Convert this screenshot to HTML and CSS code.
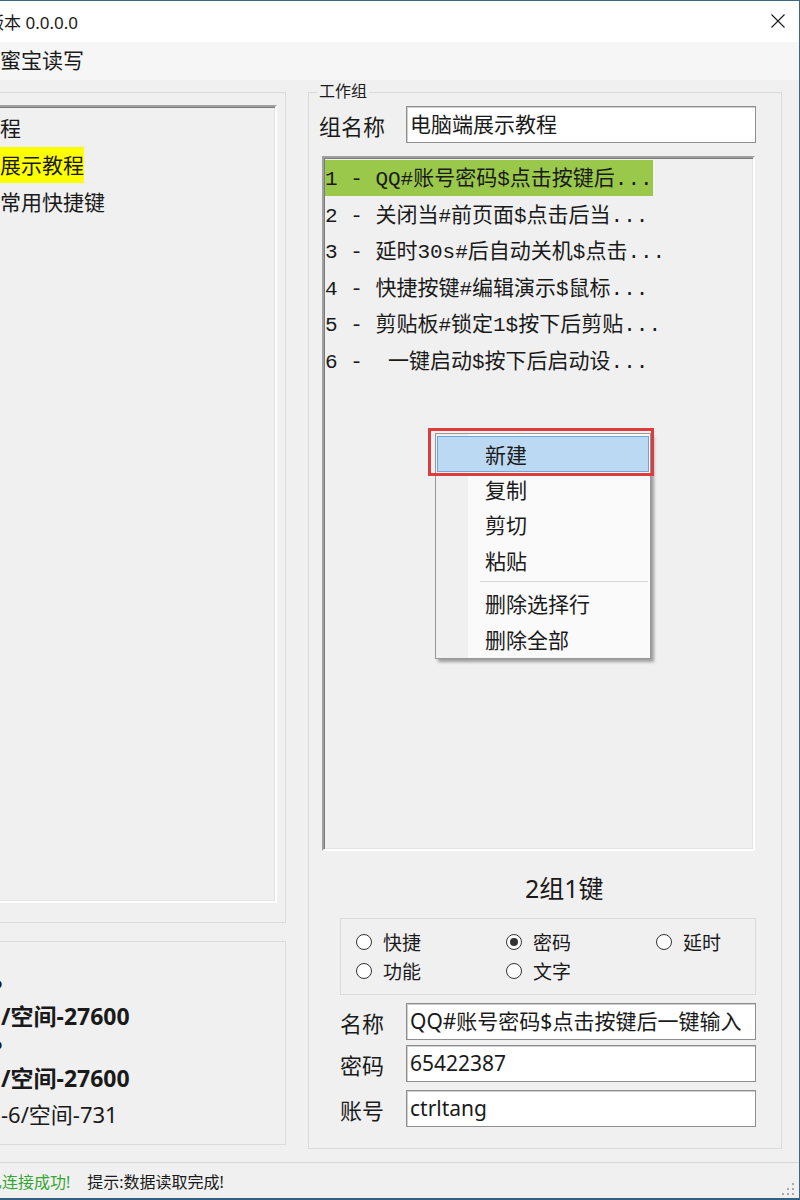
FILE: index.html
```html
<!DOCTYPE html>
<html lang="zh-CN">
<head>
    <meta charset="UTF-8">
    <meta name="viewport" content="width=device-width, initial-scale=1.0">
    <title>版本 0.0.0.0</title>
    <link rel="stylesheet" href="styles.css">
</head>
<body>
    <div class="window">
        <div class="titlebar">
            <span class="title">版本 0.0.0.0</span>
            <svg class="close" width="14" height="14" viewBox="0 0 14 14">
                <path d="M0.5 0.5 L13.5 13.5 M13.5 0.5 L0.5 13.5" stroke="#1a1a1a" stroke-width="1.1" fill="none"/>
            </svg>
        </div>

        <div class="menubar">
            <span class="menu-item">蜜宝读写</span>
        </div>

        <div class="main">
            <div class="left-col">
                <!-- group list -->
                <div class="group list-group">
                    <div class="listbox group-list">
                        <div class="group-row">程</div>
                        <div class="group-row"><span class="current">展示教程</span></div>
                        <div class="group-row">常用快捷键</div>
                    </div>
                </div>

                <!-- device info -->
                <div class="group info-group">
                    <div class="info-line h32 bold"><span class="cut-dot">•</span></div>
                    <div class="info-line h30 bold">/空间-27600</div>
                    <div class="info-line h30 bold"><span class="cut-dot">•</span></div>
                    <div class="info-line h34 bold">/空间-27600</div>
                    <div class="info-line h38">-6/空间-731</div>
                </div>
            </div>

            <div class="group work-group">
                <span class="group-title">工作组</span>

                <div class="name-row">
                    <label class="name-label">组名称</label>
                    <div class="textbox">电脑端展示教程</div>
                </div>

                <div class="listbox key-list">
                    <div class="key-row"><span class="selected">1 - QQ#账号密码$点击按键后...</span></div>
                    <div class="key-row"><span>2 - 关闭当#前页面$点击后当...</span></div>
                    <div class="key-row"><span>3 - 延时30s#后自动关机$点击...</span></div>
                    <div class="key-row"><span>4 - 快捷按键#编辑演示$鼠标...</span></div>
                    <div class="key-row"><span>5 - 剪贴板#锁定1$按下后剪贴...</span></div>
                    <div class="key-row"><span>6 -  一键启动$按下后启动设...</span></div>

                    <!-- right click menu -->
                    <div class="context-menu">
                        <div class="mark"></div>
                        <div class="menu-row hover">新建</div>
                        <div class="menu-row">复制</div>
                        <div class="menu-row">剪切</div>
                        <div class="menu-row">粘贴</div>
                        <div class="menu-sep"></div>
                        <div class="menu-row">删除选择行</div>
                        <div class="menu-row">删除全部</div>
                    </div>
                </div>

                <div class="key-title">2组1键</div>

                <div class="radio-box">
                    <label class="radio"><span class="dot"></span>快捷</label>
                    <label class="radio"><span class="dot checked"></span>密码</label>
                    <label class="radio"><span class="dot"></span>延时</label>
                    <label class="radio"><span class="dot"></span>功能</label>
                    <label class="radio"><span class="dot"></span>文字</label>
                </div>

                <div class="field first">
                    <label class="field-label">名称</label>
                    <div class="textbox">QQ#账号密码$点击按键后一键输入</div>
                </div>
                <div class="field">
                    <label class="field-label">密码</label>
                    <div class="textbox">65422387</div>
                </div>
                <div class="field last">
                    <label class="field-label">账号</label>
                    <div class="textbox">ctrltang</div>
                </div>
            </div>
        </div>

        <div class="statusbar">
            <span class="status-ok">已连接成功!</span>
            <span class="status-tip">提示:数据读取完成!</span>
            <svg class="grip" width="14" height="14" viewBox="0 0 14 14">
                <rect x="11" y="1" width="2" height="2" fill="#a8a8a8"/>
                <rect x="6" y="6" width="2" height="2" fill="#a8a8a8"/>
                <rect x="11" y="6" width="2" height="2" fill="#a8a8a8"/>
                <rect x="1" y="11" width="2" height="2" fill="#a8a8a8"/>
                <rect x="6" y="11" width="2" height="2" fill="#a8a8a8"/>
                <rect x="11" y="11" width="2" height="2" fill="#a8a8a8"/>
            </svg>
        </div>
    </div>
</body>
</html>
```

FILE: styles.css
```css
* {
    box-sizing: border-box;
}
body {
    margin: 0;
    width: 800px;
    height: 1200px;
    overflow: hidden;
    font-family: "Noto Sans", "Noto Sans CJK SC", sans-serif;
    color: #1a1a1a;
    background: #f0f0f0;
}
.window {
    width: 800px;
    height: 1200px;
    border-top: 1px solid #3a6784;
    border-right: 1px solid #3a6784;
    border-bottom: 2px solid #33607e;
    display: flex;
    flex-direction: column;
    overflow: hidden;
}

/* title + menu */
.titlebar {
    height: 41px;
    background: #ffffff;
    display: flex;
    align-items: center;
    justify-content: space-between;
    padding-right: 14px;
}
.title {
    font-size: 17px;
    margin-left: -13px;
}
.close {
    margin-top: -1px;
}
.menubar {
    height: 38px;
    background: #f6f6f6;
    display: flex;
    align-items: center;
}
.menu-item {
    font-size: 21px;
    line-height: 38px;
    margin-top: -2px;
}

.main {
    height: 1082px;
    display: flex;
    align-items: flex-start;
}
.group {
    border: 1px solid #dadada;
}

/* left column */
.left-col {
    width: 298px;
    margin-left: -12px;
    margin-top: 12px;
    display: flex;
    flex-direction: column;
}
.list-group {
    height: 831px;
    padding: 12px 8px 19px 8px;
    display: flex;
}
.listbox {
    border: 2px solid;
    border-color: #a0a0a0 #ffffff #ffffff #a0a0a0;
    box-shadow: inset 1px 1px 0 #7a7a7a, inset -1px -1px 0 #e3e3e3;
    background: #f0f0f0;
}
.group-list {
    flex: 1;
    padding: 3px 0 0 1px;
    font-size: 21px;
}
.group-row {
    height: 37px;
    line-height: 36px;
}
.current {
    background: #ffff00;
    display: inline-block;
}
.info-group {
    margin-top: 18px;
    height: 204px;
    padding: 26px 0 0 12px;
    font-size: 22px;
}
.info-line {
    display: flex;
    align-items: center;
    white-space: nowrap;
}
.info-line.bold {
    font-weight: bold;
    font-size: 23px;
}
.h30 { height: 30px; }
.h32 { height: 32px; }
.h34 { height: 34px; }
.h38 { height: 38px; }
.cut-dot {
    margin-left: -7px;
}

/* work group */
.work-group {
    position: relative;
    width: 474px;
    height: 1057px;
    margin-left: 22px;
    margin-top: 12px;
    display: flex;
    flex-direction: column;
}
.group-title {
    position: absolute;
    top: -12px;
    left: 8px;
    padding: 0 2px;
    font-size: 16px;
    line-height: 20px;
    background: #f0f0f0;
}
.name-row {
    margin: 13px 0 0 10px;
    display: flex;
    align-items: center;
}
.name-label {
    width: 87px;
    font-size: 22px;
}
.textbox {
    width: 350px;
    height: 37px;
    background: #ffffff;
    border: 1px solid #8e8e8e;
    box-shadow: inset 1px 1px 0 #cfcfcf;
    padding: 0 3px;
    font-size: 21px;
    line-height: 35px;
    white-space: nowrap;
    overflow: hidden;
}
.key-list {
    position: relative;
    margin: 13px 0 0 13px;
    width: 433px;
    height: 695px;
    padding: 2px 0 0 1px;
    font-family: "Liberation Mono", "Noto Sans CJK SC", monospace;
    font-size: 21px;
}
.key-row {
    height: 36.5px;
}
.key-row span {
    display: inline-block;
    height: 36px;
    padding-top: 3px;
    line-height: 34px;
    white-space: pre;
}
.key-row .selected {
    background: #9ac84a;
}

.context-menu {
    position: absolute;
    left: 111px;
    top: 275px;
    width: 216px;
    padding: 2px 1px 0 1px;
    border: 1px solid #979797;
    background: linear-gradient(to right, #f0f0f0 32px, #fafafa 32px);
    box-shadow: 3px 3px 3px rgba(0, 0, 0, 0.35);
    font-family: "Noto Sans CJK SC", sans-serif;
    font-size: 21px;
}
.menu-row {
    height: 35.6px;
    line-height: 34px;
    padding-left: 48px;
}
.menu-row.hover {
    background: #bcd9f3;
    border: 1px solid #6ea6dc;
    padding-left: 47px;
}
.menu-sep {
    height: 8px;
    margin-left: 43px;
    margin-right: 1px;
    border-top: 1px solid #d6d6d6;
    margin-top: 3px;
    margin-bottom: -3px;
}
.mark {
    position: absolute;
    left: -8px;
    top: -6px;
    width: 226px;
    height: 48px;
    border: 3px solid #de3b3c;
}

.key-title {
    margin-top: 19px;
    height: 36px;
    line-height: 36px;
    padding-left: 216px;
    font-size: 25px;
}
.radio-box {
    margin: 12px 0 0 31px;
    width: 416px;
    height: 77px;
    border: 1px solid #dadada;
    padding: 8px 0 0 15px;
    display: grid;
    grid-template-columns: 150px 150px 110px;
    grid-auto-rows: 29px;
}
.radio {
    display: flex;
    align-items: center;
    gap: 11px;
    font-size: 19px;
}
.dot {
    width: 16px;
    height: 16px;
    border: 1px solid #333333;
    border-radius: 50%;
    background: #ffffff;
    display: flex;
    align-items: center;
    justify-content: center;
}
.dot.checked::after {
    content: "";
    width: 8px;
    height: 8px;
    border-radius: 50%;
    background: #333333;
}
.field {
    margin: 5px 0 0 31px;
    display: flex;
    align-items: center;
}
.field.first {
    margin-top: 8px;
}
.field.last {
    margin-top: 8px;
}
.field-label {
    width: 66px;
    font-size: 22px;
}

/* status bar */
.statusbar {
    height: 36px;
    border-top: 1px solid #d7d7d7;
    display: flex;
    align-items: center;
    font-size: 16px;
    padding-right: 4px;
}
.status-ok {
    color: #34a634;
    margin-left: -14px;
}
.status-tip {
    margin-left: 17px;
}
.grip {
    margin-left: auto;
    align-self: flex-end;
    margin-bottom: 2px;
}
```
